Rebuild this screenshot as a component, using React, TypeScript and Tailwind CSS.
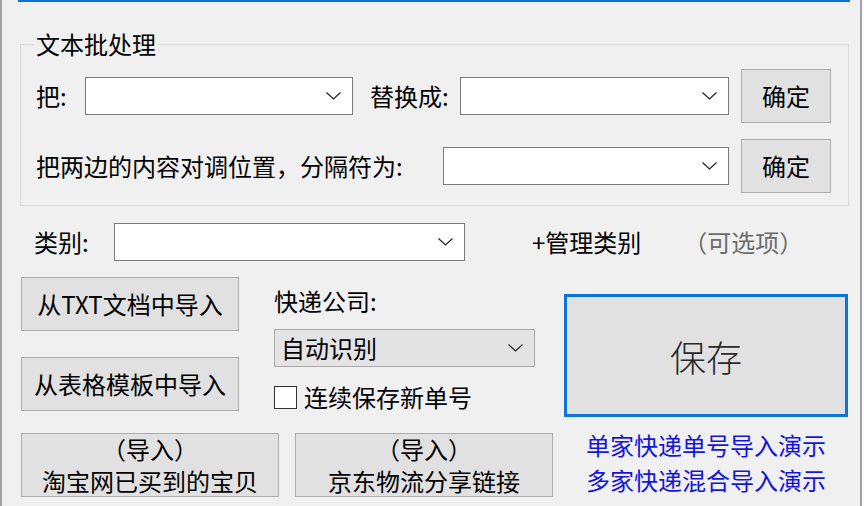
import type { ReactNode } from "react";

const font = "font-['Noto_Sans_CJK_SC','Noto_Sans',sans-serif]";

const Chevron = () => (
  <svg width="15" height="8" viewBox="0 0 15 8" className="shrink-0">
    <polyline
      points="0.5,0.5 7.5,7 14.5,0.5"
      fill="none"
      stroke="#222"
      strokeWidth="1.2"
    />
  </svg>
);

type ComboProps = {
  width: string;
  value?: string;
  gray?: boolean;
};

const ComboBox = ({ width, value, gray }: ComboProps) => (
  <div
    className={`flex h-[38px] shrink-0 items-center justify-between border pr-[11px] pl-[6px] ${width} ${
      gray ? "border-[#a9a9a9] bg-[#e3e3e3]" : "border-[#7a7a7a] bg-white"
    }`}
  >
    <span className="text-[24px] leading-[28px] text-black">{value}</span>
    <Chevron />
  </div>
);

type ButtonProps = {
  className: string;
  children: ReactNode;
};

const WinButton = ({ className, children }: ButtonProps) => (
  <button
    type="button"
    className={`flex shrink-0 flex-col items-center justify-center border border-[#adadad] bg-[#e1e1e1] text-[24px] text-black ${className}`}
  >
    {children}
  </button>
);

const App = () => {
  return (
    <div
      className={`h-[506px] w-[864px] overflow-hidden bg-[#fafafa] ${font}`}
    >
      <div className="h-[506px] w-[862px] border-r-2 border-l-2 border-[#a2a2a2] bg-[#f0f0f0] pl-[18px]">
        <div className="-ml-[2px] h-[2px] w-[832px] bg-[#0a6fd6]" />

        {/* 文本批处理 */}
        <div className="mt-[42px] w-[829px] border border-[#d9d9d9] pb-[12px]">
          <div className="-mt-[15px] ml-[13px] w-fit bg-[#f0f0f0] px-[2px] text-[24px] leading-[28px] text-black">
            文本批处理
          </div>

          <div className="mt-[11px] flex h-[54px] items-center pl-[15px]">
            <span className="w-[49px] text-[24px] leading-[28px] text-black">
              把:
            </span>
            <ComboBox width="w-[268px]" />
            <span className="ml-[17px] w-[90px] text-[24px] leading-[28px] text-black">
              替换成:
            </span>
            <ComboBox width="w-[269px]" />
            <WinButton className="ml-[12px] h-[54px] w-[90px]">确定</WinButton>
          </div>

          <div className="mt-[16px] flex h-[54px] items-center pl-[15px]">
            <span className="w-[407px] text-[24px] leading-[28px] text-black">
              把两边的内容对调位置，分隔符为:
            </span>
            <ComboBox width="w-[286px]" />
            <WinButton className="ml-[12px] h-[54px] w-[90px]">确定</WinButton>
          </div>
        </div>

        {/* 类别 */}
        <div className="mt-[17px] flex h-[38px] items-center pl-[14px]">
          <span className="w-[80px] text-[24px] leading-[28px] text-black">
            类别:
          </span>
          <ComboBox width="w-[351px]" />
          <span className="ml-[67px] text-[24px] leading-[28px] text-black">
            +管理类别
          </span>
          <span className="ml-[42px] text-[24px] leading-[28px] text-[#6b6b6b]">
            （可选项）
          </span>
        </div>

        {/* 导入 / 快递公司 / 保存 */}
        <div className="mt-[16px] flex items-start">
          <div className="ml-[1px] flex w-[218px] flex-col">
            <WinButton className="h-[54px] w-[218px] leading-[28px]">
              从TXT文档中导入
            </WinButton>
            <WinButton className="mt-[26px] h-[54px] w-[218px] leading-[28px]">
              从表格模板中导入
            </WinButton>
          </div>

          <div className="ml-[35px] flex w-[261px] flex-col">
            <span className="mt-[10px] text-[24px] leading-[28px] text-black">
              快递公司:
            </span>
            <div className="mt-[14px]">
              <ComboBox width="w-[261px]" value="自动识别" gray />
            </div>
            <label className="mt-[16px] flex h-[28px] items-center">
              <span className="h-[23px] w-[23px] shrink-0 border border-[#333] bg-white" />
              <span className="ml-[7px] text-[24px] leading-[28px] text-black">
                连续保存新单号
              </span>
            </label>
          </div>

          <button
            type="button"
            className="mt-[17px] ml-[29px] flex h-[123px] w-[284px] items-center justify-center border-[3px] border-[#0a74da] bg-[#e1e1e1] text-[36px] font-light text-[#2a2a2a]"
          >
            保存
          </button>
        </div>

        {/* 底部 */}
        <div className="mt-[16px] flex items-start">
          <WinButton className="ml-[1px] h-[64px] w-[258px] leading-[32px]">
            <span>（导入）</span>
            <span>淘宝网已买到的宝贝</span>
          </WinButton>
          <WinButton className="ml-[16px] h-[64px] w-[258px] leading-[32px]">
            <span>（导入）</span>
            <span>京东物流分享链接</span>
          </WinButton>
          <div className="-mt-[6px] ml-[33px] flex flex-col text-[24px] leading-[35px] text-[#1414dc]">
            <span>单家快递单号导入演示</span>
            <span>多家快递混合导入演示</span>
          </div>
        </div>
      </div>
    </div>
  );
};

export default App;
